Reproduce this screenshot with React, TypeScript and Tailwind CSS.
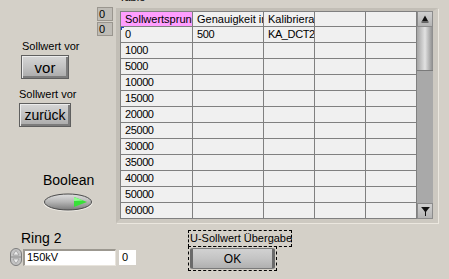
import React from 'react'

const rows = ['0', '1000', '5000', '10000', '15000', '20000', '25000', '30000', '35000', '40000', '50000', '60000']
const headers = ['Sollwertsprung', 'Genauigkeit in V', 'Kalibrierart', '', '']

function LvButton({ label, w, size }: { label: string; w: string; size: string }) {
  return (
    <div
      className={`${w} h-[24px] flex items-center justify-center border border-[#5f5f5f] bg-gradient-to-b from-[#d6d6d6] via-[#c2c2c2] to-[#a9a9a9] shadow-[inset_1px_1px_0_#ececec,inset_-2px_-2px_0_#7c7c7c] ${size} leading-none text-black`}>
      {label}
    </div>
  )
}

function Led() {
  return (
    <svg width="50" height="19" viewBox="0 0 50 19">
      <defs>
        <linearGradient id="ledg" x1="0" y1="0" x2="0" y2="1">
          <stop offset="0" stopColor="#e0e0e0" />
          <stop offset="0.5" stopColor="#b4b4b4" />
          <stop offset="1" stopColor="#7a7a7a" />
        </linearGradient>
      </defs>
      <ellipse cx="25" cy="10" rx="24.5" ry="8.5" fill="#efece6" />
      <ellipse cx="25" cy="9" rx="23.5" ry="8" fill="url(#ledg)" stroke="#4a4a4a" strokeWidth="1" />
      <polygon points="31,4 44,9 31,14" fill="#38e038" />
      <polygon points="31,4 40,7.5 31,8" fill="#8cff8c" />
    </svg>
  )
}

function Spinner() {
  return (
    <svg width="12" height="18" viewBox="0 0 12 18">
      <rect x="0.5" y="0.5" width="11" height="17" rx="5.5" fill="#c4c4c4" stroke="#7c7c7c" />
      <line x1="1" y1="9" x2="11" y2="9" stroke="#8a8a8a" />
      <polygon points="6,2.5 9,7 3,7" fill="#ededed" stroke="#8a8a8a" strokeWidth="0.6" />
      <polygon points="6,15.5 9,11 3,11" fill="#ededed" stroke="#8a8a8a" strokeWidth="0.6" />
    </svg>
  )
}

export default function App() {
  return (
    <div
      className="w-[449px] h-[279px] overflow-hidden bg-[#d4d0c8] text-black"
      style={{ fontFamily: '"Liberation Sans", Arial, sans-serif' }}>
      {/* top section */}
      <div className="flex h-[222px]">
        {/* buttons + boolean */}
        <div className="w-[96px] flex flex-col items-start">
          <div className="ml-[22px] mt-[40px] text-[11px] leading-[13px]">Sollwert vor</div>
          <div className="ml-[21px] mt-[2px]">
            <LvButton label="vor" w="w-[48px]" size="text-[15px]" />
          </div>
          <div className="ml-[19px] mt-[9px] text-[11px] leading-[13px]">Sollwert vor</div>
          <div className="ml-[19px] mt-[2px]">
            <LvButton label="zurück" w="w-[52px]" size="text-[14px]" />
          </div>
          <div className="ml-[43px] mt-[45px] text-[14px] leading-[16px]">Boolean</div>
          <div className="ml-[43px] mt-[5px]">
            <Led />
          </div>
        </div>

        {/* index */}
        <div className="ml-[1px] mt-[7px] w-[16px] flex flex-col gap-px">
          <div className="h-[14px] bg-[#bfbcb6] border border-[#9a968f] text-[11px] leading-[12px] pl-[1px]">0</div>
          <div className="h-[14px] bg-[#bfbcb6] border border-[#9a968f] text-[11px] leading-[12px] pl-[1px]">0</div>
        </div>

        {/* table */}
        <div className="ml-[3px] flex flex-col">
          <div className="-mt-[9px] ml-[3px] h-[13px] text-[11px] leading-[13px]">Table</div>
          <div className="mt-[4px] relative flex border-t-[3px] border-l-[4px] border-r-[5px] border-b-[4px] border-t-[#c2beb6] border-l-[#c2beb6] border-r-[#cdc9c1] border-b-[#cdc9c1] shadow-[1px_1px_0_#ebe7df]">
            <div className="border border-[#808080] bg-[#808080]">
              <div className="grid grid-cols-[71px_70px_50px_50px_50px] grid-rows-[14px_repeat(12,15px)] gap-px">
                {headers.map((h, i) => (
                  <div
                    key={'h' + i}
                    className={`${i === 0 ? 'bg-[#ff9eff]' : 'bg-[#f0f0f0]'} overflow-hidden whitespace-nowrap pl-[4px] text-[11px] leading-[14px]`}>
                    {h}
                  </div>
                ))}
                {rows.map((r, ri) =>
                  [r, ri === 0 ? '500' : '', ri === 0 ? 'KA_DCT2' : '', '', ''].map((c, ci) => (
                    <div
                      key={ri + '-' + ci}
                      className="bg-[#f0f0f0] overflow-hidden whitespace-nowrap pl-[4px] text-[11px] leading-[15px] tracking-[-0.4px]">
                      {c}
                    </div>
                  )),
                )}
              </div>
            </div>
            <div className="absolute left-[1px] top-[16px] w-[3px] h-[3px] border-l border-t border-[#2040c0]" />

            {/* scrollbar */}
            <div className="w-[16px] flex flex-col bg-[#a9a9a9]">
              <div className="h-[16px] flex items-center justify-center bg-gradient-to-b from-[#d0d0d0] to-[#b4b4b4] border border-[#8c8c8c]">
                <svg width="8" height="8" viewBox="0 0 8 8">
                  <polygon points="4,0.5 7,6 1,6" fill="#111" />
                  <line x1="0.5" y1="7" x2="7.5" y2="7" stroke="#111" />
                </svg>
              </div>
              <div className="h-[44px] bg-gradient-to-r from-[#a4a4a4] via-[#e2e2e2] to-[#8a8a8a] border-b border-[#7a7a7a]" />
              <div className="flex-1" />
              <div className="h-[16px] flex items-center justify-center bg-gradient-to-b from-[#d0d0d0] to-[#b4b4b4] border border-[#8c8c8c]">
                <svg width="9" height="9" viewBox="0 0 9 9">
                  <line x1="0.5" y1="0.5" x2="8.5" y2="0.5" stroke="#111" />
                  <polygon points="1,1 8,1 4.5,5.5" fill="#111" />
                  <line x1="4.5" y1="5" x2="4.5" y2="9" stroke="#111" />
                </svg>
              </div>
            </div>
          </div>
        </div>
      </div>

      {/* bottom section */}
      <div className="flex h-[57px]">
        <div className="w-[135px] flex flex-col items-start">
          <div className="ml-[21px] mt-[8px] text-[14px] leading-[16px]">Ring 2</div>
          <div className="mt-[2px] flex items-start">
            <div className="ml-[10px]">
              <Spinner />
            </div>
            <div className="ml-[1px] mt-[1px] w-[93px] h-[17px] bg-white border-t-2 border-l-2 border-t-[#9c9890] border-l-[#9c9890] border-r border-b border-r-[#e8e4dc] border-b-[#e8e4dc] pl-[2px] text-[11px] leading-[13px]">
              150kV
            </div>
            <div className="ml-[3px] mt-[2px] w-[17px] h-[15px] bg-white pl-[3px] text-[11px] leading-[15px]">0</div>
          </div>
        </div>

        <div className="ml-[53px] mt-[8px] flex flex-col items-start">
          <div className="w-[104px] h-[17px] border border-dashed border-black text-[11px] leading-[15px] pl-[1px] whitespace-nowrap">
            U-Sollwert Übergabe
          </div>
          <div className="-mt-px w-[89px] h-[25px] border border-dashed border-black p-px">
            <div className="h-full flex items-center justify-center rounded-[2px] border-x-[3px] border-y border-x-[#6a6a6a] border-y-[#7a7a7a] bg-gradient-to-b from-[#d2d2d2] via-[#c4c4c4] to-[#b0b0b0] text-[12px] leading-none">
              OK
            </div>
          </div>
        </div>
      </div>
    </div>
  )
}
